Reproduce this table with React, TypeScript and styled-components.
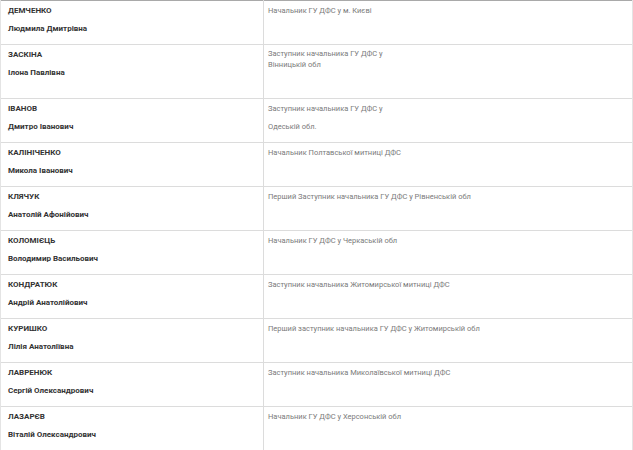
import React from "react";
import styled, { createGlobalStyle } from "styled-components";

// Data
interface Official {
  surname: string;
  name: string;
  post: string[];
  compact?: boolean;
}

const OFFICIALS: Array<Official> = [
  { surname: "ДЕМЧЕНКО", name: "Людмила Дмитрівна", post: ["Начальник ГУ ДФС у м. Києві"] },
  { surname: "ЗАСКІНА", name: "Ілона Павлівна", post: ["Заступник начальника ГУ ДФС у", "Вінницькій обл"], compact: true },
  { surname: "ІВАНОВ", name: "Дмитро Іванович", post: ["Заступник начальника ГУ ДФС у", "Одеській обл."] },
  { surname: "КАЛІНІЧЕНКО", name: "Микола Іванович", post: ["Начальник Полтавської митниці ДФС"] },
  { surname: "КЛЯЧУК", name: "Анатолій Афонійович", post: ["Перший Заступник начальника ГУ ДФС у Рівненській обл"] },
  { surname: "КОЛОМІЄЦЬ", name: "Володимир Васильович", post: ["Начальник ГУ ДФС у Черкаській обл"] },
  { surname: "КОНДРАТЮК", name: "Андрій Анатолійович", post: ["Заступник начальника Житомирської митниці ДФС"] },
  { surname: "КУРИШКО", name: "Лілія Анатоліївна", post: ["Перший заступник начальника ГУ ДФС у Житомирській обл"] },
  { surname: "ЛАВРЕНЮК", name: "Сергій Олександрович", post: ["Заступник начальника Миколаївської митниці ДФС"] },
  { surname: "ЛАЗАРЄВ", name: "Віталій Олександрович", post: ["Начальник ГУ ДФС у Херсонській обл"] },
];

const GlobalStyle = createGlobalStyle`
  html, body {
    margin: 0;
    padding: 0;
    background: #fff;
  }
  body {
    font-family: Roboto, "Liberation Sans", sans-serif;
  }
`;

// Styled Components
const Table = styled.table`
  width: 633px;
  border-collapse: collapse;
  border-top: 1px solid #a9a9a9;
  table-layout: fixed;
`;

const Row = styled.tr`
  border-bottom: 1px solid #dcdcdc;
`;

const NameCell = styled.td`
  width: 263px;
  box-sizing: border-box;
  vertical-align: top;
  padding: 1px 6px 6px 7px;
  border-left: 1px solid #e4e4e4;
  border-right: 1px solid #dcdcdc;
`;

const PostCell = styled.td`
  vertical-align: top;
  padding: 1px 4px 6px 4px;
  border-right: 1px solid #e4e4e4;
`;

const Line = styled.div`
  height: 18px;
  line-height: 18px;
  font-size: 8px;
  font-weight: 700;
  color: #333;
  white-space: nowrap;
`;

const PostLine = styled.div`
  height: 18px;
  line-height: 18px;
  font-size: 7.5px;
  font-weight: 400;
  color: #7a7a7a;
  white-space: nowrap;
`;

const PostBlock = styled.div`
  margin: 2px 0 22px;
  line-height: 11px;
  font-size: 7.5px;
  color: #7a7a7a;
`;

const App: React.FC = () => (
  <>
    <GlobalStyle />
    <Table>
      <tbody>
        {OFFICIALS.map((o, i) => (
          <Row key={i}>
            <NameCell>
              <Line>{o.surname}</Line>
              <Line>{o.name}</Line>
            </NameCell>
            <PostCell>
              {o.compact ? (
                <PostBlock>
                  {o.post.map((p, j) => (
                    <React.Fragment key={j}>
                      {j > 0 && <br />}
                      {p}
                    </React.Fragment>
                  ))}
                </PostBlock>
              ) : (
                o.post.map((p, j) => <PostLine key={j}>{p}</PostLine>)
              )}
            </PostCell>
          </Row>
        ))}
      </tbody>
    </Table>
  </>
);

export default App;
